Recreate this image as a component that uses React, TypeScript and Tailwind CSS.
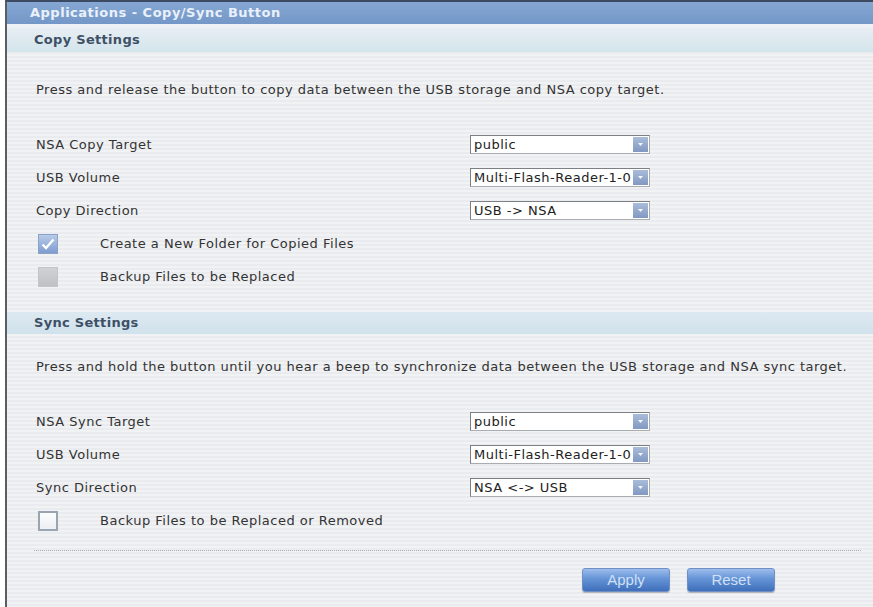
import React from "react";

const font = { fontFamily: '"DejaVu Sans", Verdana, sans-serif' };

function Select({ value }: { value: string }) {
  return (
    <div className="w-[180px] h-[19px] flex items-stretch bg-white border border-[#a9acb0] border-t-[#7c7f84] border-l-[#7c7f84]">
      <div className="flex-1 pl-[3px] text-[13px] tracking-[0.5px] leading-[17px] text-[#222] whitespace-nowrap overflow-hidden">{value}</div>
      <div className="w-[15px] m-[1px] bg-[linear-gradient(180deg,#a9bcd9,#8298c2)] flex items-center justify-center">
        <svg width="5" height="4" viewBox="0 0 5 4"><path d="M0 0 L5 0 L2.5 3 Z" fill="#f4f6fa" /></svg>
      </div>
    </div>
  );
}

function FieldRow({ label, value }: { label: string; value: string }) {
  return (
    <div className="h-[33px] flex items-center">
      <div className="w-[463px] pl-[29px] text-[13px] tracking-[0.5px] text-[#333]">{label}</div>
      <Select value={value} />
    </div>
  );
}

function CheckRow({ label, kind }: { label: string; kind: "checked" | "gray" | "empty" }) {
  let box: React.ReactNode;
  if (kind === "checked") {
    box = (
      <div className="w-[20px] h-[20px] bg-[linear-gradient(180deg,#b7cbe8,#7f9cd0)] border border-[#8aa2c8] flex items-center justify-center">
        <svg width="14" height="12" viewBox="0 0 14 12"><path d="M1.5 6.5 L5 10 L12.5 1.5" stroke="#ffffff" strokeWidth="2.4" fill="none" /></svg>
      </div>
    );
  } else if (kind === "gray") {
    box = <div className="w-[20px] h-[20px] bg-[linear-gradient(180deg,#d0d1d3,#bfc1c4)] border border-[#c3c5c8]" />;
  } else {
    box = <div className="w-[20px] h-[20px] bg-[linear-gradient(180deg,#fbfcfd,#eceff3)] border-2 border-[#9aa3b0]" />;
  }
  return (
    <div className="h-[33px] flex items-center">
      <div className="w-[93px] pl-[31px]">{box}</div>
      <div className="text-[13px] tracking-[0.5px] text-[#333]">{label}</div>
    </div>
  );
}

function SectionHeader({ title, cls }: { title: string; cls: string }) {
  return (
    <div className={"flex items-center pl-[27px] text-[13px] tracking-[0.3px] font-bold text-[#3e5066] " + cls}>{title}</div>
  );
}

function Btn({ label }: { label: string }) {
  return (
    <div className="w-[88px] h-[24px] rounded-[3px] border border-[#6e90c4] bg-[linear-gradient(180deg,#9dbdec_0%,#6493d6_45%,#3f6fba_100%)] flex items-center justify-center text-[15px] text-[#cfe0f7] shadow-[0_1px_1px_rgba(0,0,0,0.25)]" style={{ fontFamily: '"Liberation Sans", Arial, sans-serif' }}>
      {label}
    </div>
  );
}

export default function App() {
  return (
    <div className="w-[873px] h-[607px] bg-white pl-[5px] overflow-hidden" style={font}>
      <div className="h-full flex flex-col border-l-2 border-l-[#5a5d62] border-t-2 border-t-[#3d4b62] bg-[repeating-linear-gradient(180deg,#f1f2f4_0px,#f1f2f4_2px,#e9ebee_2px,#e9ebee_4px)]">
        <div className="h-[22px] shrink-0 flex items-center pl-[23px] bg-[linear-gradient(180deg,#86a7d3,#7397c8)] text-[13px] tracking-[0.5px] font-bold text-[#eaf1fb]">
          Applications - Copy/Sync Button
        </div>
        <div className="h-[4px] shrink-0 bg-[#eef1f5]" />
        <SectionHeader title="Copy Settings" cls="h-[24px] shrink-0 bg-[linear-gradient(180deg,#e7eef3,#d3e5ec)]" />
        <div className="mt-[30px] h-[16px] pl-[29px] text-[13px] tracking-[0.5px] leading-[16px] text-[#333] whitespace-nowrap">
          Press and release the button to copy data between the USB storage and NSA copy target.
        </div>
        <div className="mt-[30px] flex flex-col">
          <FieldRow label="NSA Copy Target" value="public" />
          <FieldRow label="USB Volume" value="Multi-Flash-Reader-1-0" />
          <FieldRow label="Copy Direction" value="USB -> NSA" />
          <CheckRow label="Create a New Folder for Copied Files" kind="checked" />
          <CheckRow label="Backup Files to be Replaced" kind="gray" />
        </div>
        <SectionHeader title="Sync Settings" cls="mt-[19px] h-[22px] shrink-0 bg-[linear-gradient(180deg,#dde9f1,#d0e2ec)]" />
        <div className="mt-[25px] h-[16px] pl-[29px] text-[13px] tracking-[0.5px] leading-[16px] text-[#333] whitespace-nowrap">
          Press and hold the button until you hear a beep to synchronize data between the USB storage and NSA sync target.
        </div>
        <div className="mt-[30px] flex flex-col">
          <FieldRow label="NSA Sync Target" value="public" />
          <FieldRow label="USB Volume" value="Multi-Flash-Reader-1-0" />
          <FieldRow label="Sync Direction" value="NSA <-> USB" />
          <CheckRow label="Backup Files to be Replaced or Removed" kind="empty" />
        </div>
        <div className="mt-[13px] ml-[27px] mr-[12px] border-t border-dotted border-[#a8adb3]" />
        <div className="mt-[17px] flex gap-[17px] pl-[575px]">
          <Btn label="Apply" />
          <Btn label="Reset" />
        </div>
      </div>
    </div>
  );
}
